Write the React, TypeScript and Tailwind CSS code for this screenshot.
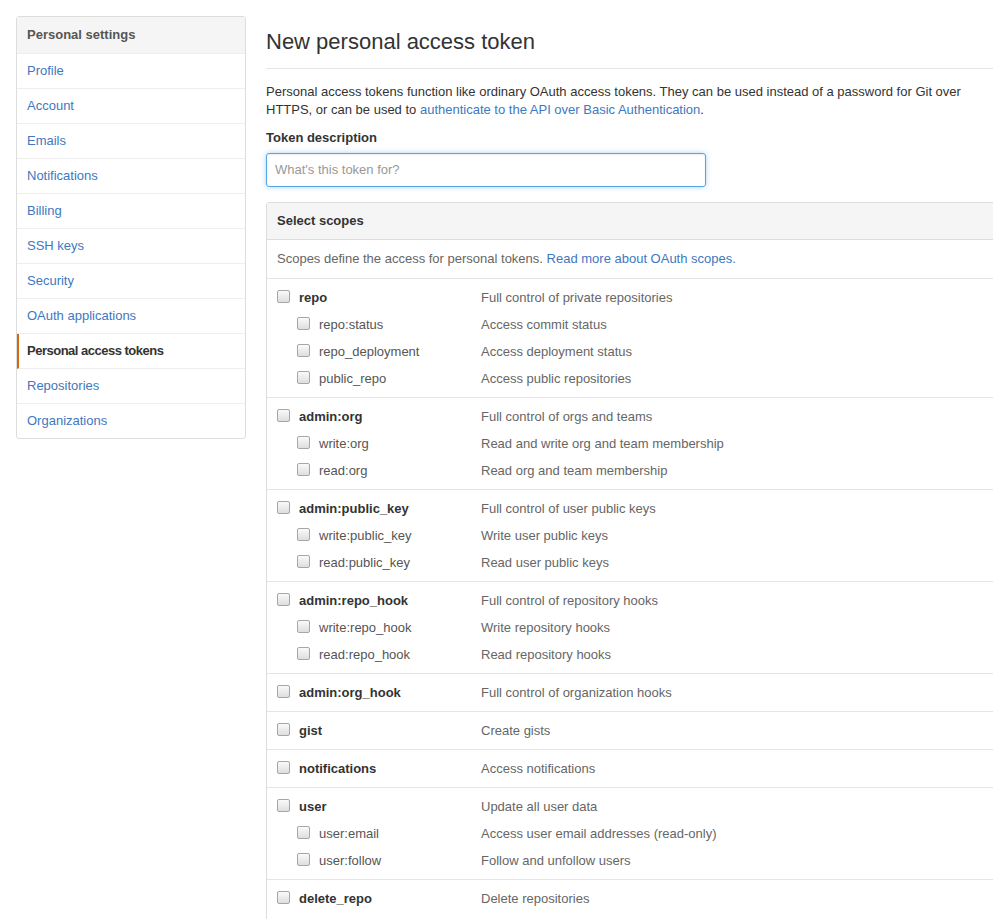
const menu = [
  "Profile",
  "Account",
  "Emails",
  "Notifications",
  "Billing",
  "SSH keys",
  "Security",
  "OAuth applications",
  "Personal access tokens",
  "Repositories",
  "Organizations",
];

type Scope = { name: string; desc: string; subs?: { name: string; desc: string }[] };

const scopes: Scope[] = [
  {
    name: "repo",
    desc: "Full control of private repositories",
    subs: [
      { name: "repo:status", desc: "Access commit status" },
      { name: "repo_deployment", desc: "Access deployment status" },
      { name: "public_repo", desc: "Access public repositories" },
    ],
  },
  {
    name: "admin:org",
    desc: "Full control of orgs and teams",
    subs: [
      { name: "write:org", desc: "Read and write org and team membership" },
      { name: "read:org", desc: "Read org and team membership" },
    ],
  },
  {
    name: "admin:public_key",
    desc: "Full control of user public keys",
    subs: [
      { name: "write:public_key", desc: "Write user public keys" },
      { name: "read:public_key", desc: "Read user public keys" },
    ],
  },
  {
    name: "admin:repo_hook",
    desc: "Full control of repository hooks",
    subs: [
      { name: "write:repo_hook", desc: "Write repository hooks" },
      { name: "read:repo_hook", desc: "Read repository hooks" },
    ],
  },
  { name: "admin:org_hook", desc: "Full control of organization hooks" },
  { name: "gist", desc: "Create gists" },
  { name: "notifications", desc: "Access notifications" },
  {
    name: "user",
    desc: "Update all user data",
    subs: [
      { name: "user:email", desc: "Access user email addresses (read-only)" },
      { name: "user:follow", desc: "Follow and unfollow users" },
    ],
  },
  { name: "delete_repo", desc: "Delete repositories" },
];

function Box() {
  return (
    <span className="inline-block w-[13px] h-[13px] shrink-0 rounded-[2px] border border-[#a6a6a6] bg-gradient-to-b from-[#fafafa] to-[#dedede] mt-[-3px]" />
  );
}

function Row({ name, desc, sub }: { name: string; desc: string; sub?: boolean }) {
  return (
    <div className="flex items-center h-[27px]">
      <div className={`flex items-center w-[204px] ${sub ? "pl-5" : ""}`}>
        <Box />
        <span className={`ml-[9px] ${sub ? "text-[#555]" : "font-bold text-[#333]"}`}>{name}</span>
      </div>
      <span className="text-[#666]">{desc}</span>
    </div>
  );
}

export default function App() {
  return (
    <div className="w-[993px] h-[919px] overflow-hidden bg-white font-['Liberation_Sans',Arial,sans-serif] text-[13px] text-[#333]">
      <div className="flex pt-4 pl-4 w-[1010px]">
        {/* Sidebar */}
        <div className="w-[230px] shrink-0 self-start border border-[#ddd] rounded-[3px]">
          <div className="h-[37px] px-[10px] flex items-center bg-[#f5f5f5] border-b border-[#eee] font-bold text-[#555]">
            Personal settings
          </div>
          {menu.map((m, i) => {
            const active = m === "Personal access tokens";
            const last = i === menu.length - 1;
            return (
              <div
                key={m}
                className={`flex items-center px-[10px] ${last ? "h-[34px]" : "h-[35px] border-b border-[#eee]"} ${
                  active ? "border-l-2 border-l-[#d26911] pl-[8px] font-bold tracking-[-0.5px] text-[#333]" : "text-[#4078c0]"
                }`}
              >
                {m}
              </div>
            );
          })}
        </div>

        {/* Main */}
        <div className="ml-5 w-[735px] shrink-0">
          <h2 className="text-[22px] leading-[28px] text-[#333] pt-[12px] pb-[12px] border-b border-[#e5e5e5]">
            New personal access token
          </h2>
          <p className="mt-[14px] leading-[18px]">
            Personal access tokens function like ordinary OAuth access tokens. They can be used instead of a password for
            Git over HTTPS, or can be used to{" "}
            <span className="text-[#4078c0]">authenticate to the API over Basic Authentication</span>.
          </p>
          <div className="mt-[10px] font-bold leading-[18px]">Token description</div>
          <div className="mt-[6px] w-[440px] h-[34px] flex items-center px-2 border border-[#51a7e8] rounded-[3px] shadow-[inset_0_1px_2px_rgba(0,0,0,0.075),0_0_5px_rgba(81,167,232,0.5)] text-[#999]">
            What's this token for?
          </div>

          <div className="mt-[15px] border border-[#ddd] rounded-[3px] pb-[10px]">
            <div className="h-[37px] flex items-center px-[10px] bg-[#f5f5f5] border-b border-[#ddd] font-bold text-[#333]">
              Select scopes
            </div>
            <div className="h-[38px] flex items-center px-[10px] text-[#666]">
              Scopes define the access for personal tokens.&nbsp;
              <span className="text-[#4078c0]">Read more about OAuth scopes.</span>
            </div>
            {scopes.map((s) => (
              <div key={s.name} className="border-t border-[#e5e5e5] py-[5px] pl-[10px]">
                <Row name={s.name} desc={s.desc} />
                {s.subs?.map((x) => (
                  <Row key={x.name} name={x.name} desc={x.desc} sub />
                ))}
              </div>
            ))}
          </div>
        </div>
      </div>
    </div>
  );
}
